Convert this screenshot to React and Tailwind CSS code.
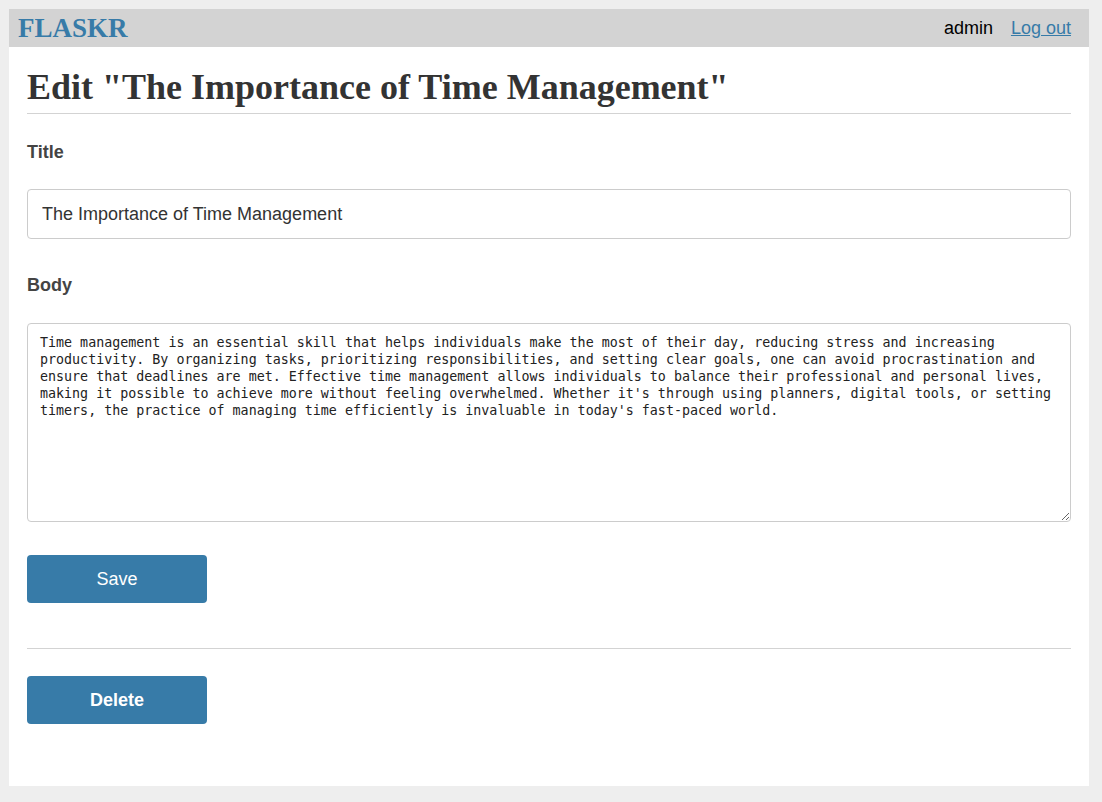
import React, { useState } from "react";

const body =
  "Time management is an essential skill that helps individuals make the most of their day, reducing stress and increasing productivity. By organizing tasks, prioritizing responsibilities, and setting clear goals, one can avoid procrastination and ensure that deadlines are met. Effective time management allows individuals to balance their professional and personal lives, making it possible to achieve more without feeling overwhelmed. Whether it's through using planners, digital tools, or setting timers, the practice of managing time efficiently is invaluable in today's fast-paced world.";

const App = () => {
  const [title, setTitle] = useState("The Importance of Time Management");
  const [text, setText] = useState(body);

  return (
    <div className="w-full min-h-[802px] bg-[#eeeeee] p-[9px] font-['Liberation_Sans',Arial,sans-serif] text-[#333]">
      <div className="flex flex-col w-[1080px] h-[777px] bg-white">
        {/* nav */}
        <div className="flex w-full h-[38px] items-center justify-between bg-[#d3d3d3] pl-[9px] pr-[18px]">
          <span className="font-['Liberation_Serif',serif] font-bold text-[27px] text-[#377ba8] leading-none">
            FLASKR
          </span>
          <div className="flex items-center gap-x-[18px] text-[18px]">
            <span className="text-black">admin</span>
            <a href="#" className="text-[#377ba8] underline">
              Log out
            </a>
          </div>
        </div>

        <div className="flex flex-col w-full px-[18px]">
          <h1 className="mt-[20px] pb-[5px] border-b border-[#d3d3d3] font-['Liberation_Serif',serif] font-bold text-[36px] leading-[41px] text-[#333]">
            Edit "The Importance of Time Management"
          </h1>

          <form className="flex flex-col">
            <label className="mt-[29px] font-bold text-[18px] leading-[18px] text-[#444]">
              Title
            </label>
            <input
              value={title}
              onChange={(e) => setTitle(e.target.value)}
              className="mt-[28px] h-[50px] w-full rounded-[4px] border border-[#cccccc] px-[14px] text-[18px] text-[#333] outline-none"
            />
            <label className="mt-[37px] font-bold text-[18px] leading-[18px] text-[#444]">
              Body
            </label>
            <textarea
              value={text}
              onChange={(e) => setText(e.target.value)}
              className="mt-[29px] h-[199px] w-full rounded-[4px] border border-[#cccccc] px-[12px] py-[10px] font-['DejaVu_Sans_Mono','Liberation_Mono',monospace] text-[13.33px] leading-[17px] text-[#222] outline-none"
            />
            <button
              type="button"
              className="mt-[33px] h-[48px] w-[180px] rounded-[4px] bg-[#377ba8] text-[18px] text-white"
            >
              Save
            </button>
          </form>

          <hr className="mt-[45px] border-t border-[#d3d3d3]" />

          <button
            type="button"
            className="mt-[27px] h-[48px] w-[180px] rounded-[4px] bg-[#377ba8] text-[18px] font-bold text-white"
          >
            Delete
          </button>
        </div>
      </div>
    </div>
  );
};

export default App;
